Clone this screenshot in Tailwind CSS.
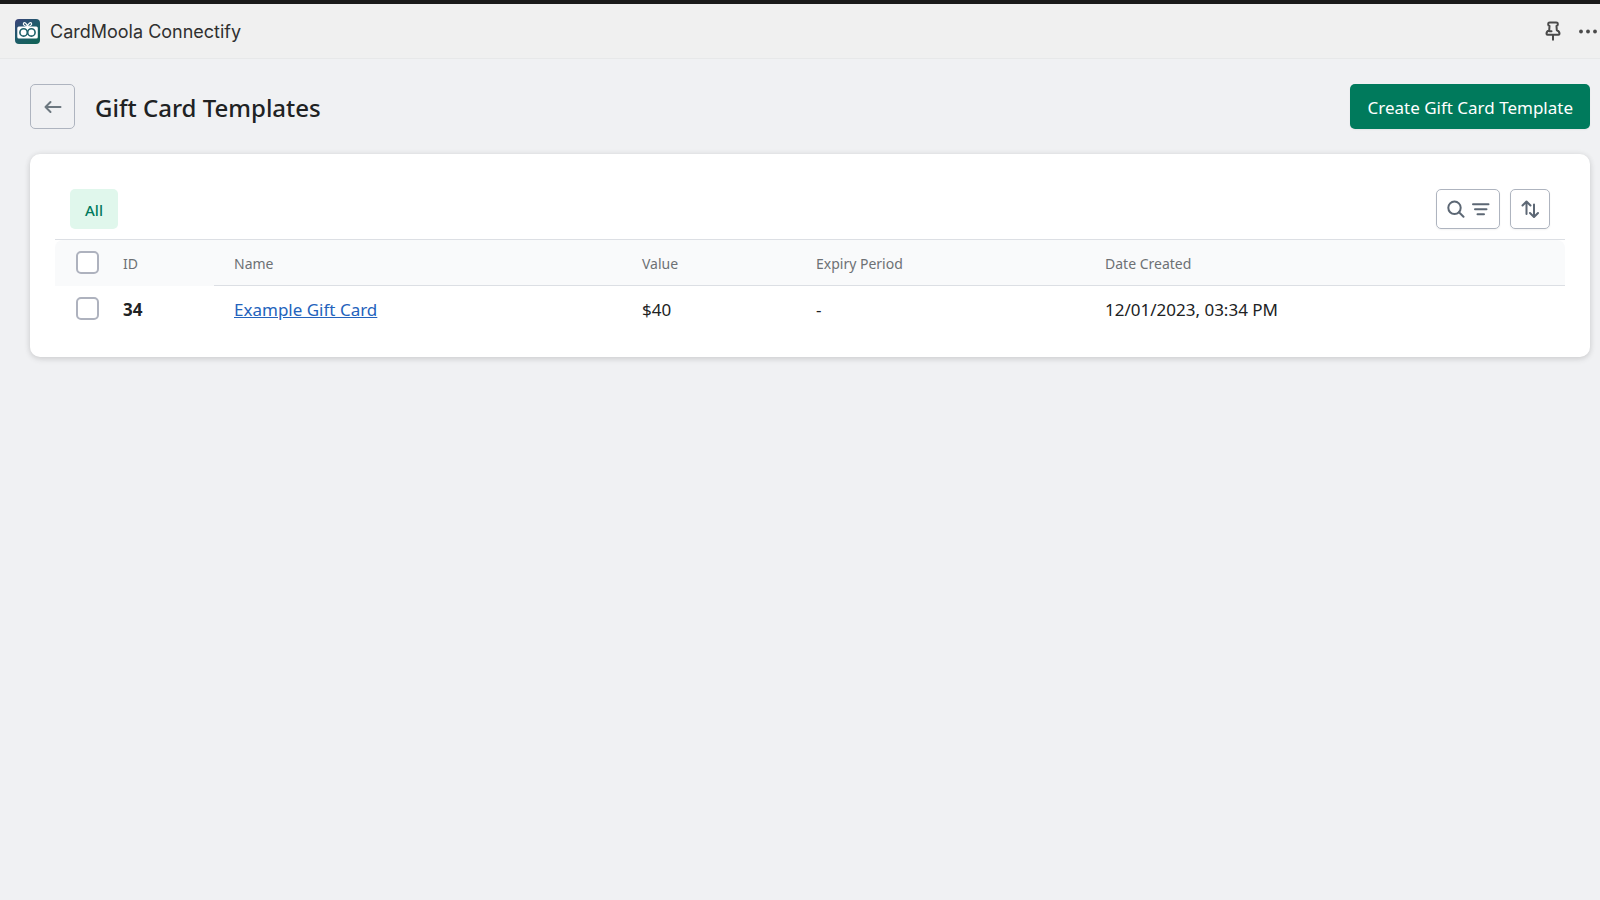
<!DOCTYPE html>
<html lang="en">
<head>
<meta charset="utf-8">
<meta name="viewport" content="width=device-width, initial-scale=1">
<title>CardMoola Connectify</title>
<script src="https://cdn.jsdelivr.net/npm/@tailwindcss/browser@4"></script>
</head>
<body class="min-h-screen bg-[#f0f1f3] font-['Noto_Sans',sans-serif] text-[17px] text-[#202223]">
<header class="flex h-[59px] items-center justify-between border-t-4 border-b border-t-[#1a1a1a] border-b-[#e7e8e9] bg-[#f0f0f0] pl-[15px]">
  <div class="flex items-center gap-[10px]">
    <svg class="size-[25px]" viewBox="0 0 25 25" aria-hidden="true">
      <defs><linearGradient id="logo" x1="0" y1="0" x2="0.7" y2="1"><stop offset="0" stop-color="#3b4279"/><stop offset="0.5" stop-color="#205a6c"/><stop offset="1" stop-color="#136259"/></linearGradient></defs>
      <rect width="25" height="25" rx="4" fill="url(#logo)"/>
      <rect x="2.3" y="7.5" width="20.5" height="12" rx="1.5" fill="#fff"/>
      <path d="M12.500 7.500C10 7.500 7.500 5.500 8.500 4.200S12 4.500 12.500 7.500C13 4.500 15.500 2.900 16.500 4.200S15 7.500 12.500 7.500" fill="none" stroke="#fff" stroke-width="1.100"/>
      <g fill="none" stroke="#1c5f68" stroke-width="1.600"><circle cx="8.600" cy="13.400" r="3.700"/><circle cx="16.400" cy="13.400" r="3.700"/></g>
    </svg>
    <span class="pt-0.5 font-['Inter',sans-serif] text-[18px] leading-6 text-[#303030]">CardMoola Connectify</span>
  </div>
  <div class="flex items-center gap-[10px] text-[#4a4a4a]">
    <button type="button" aria-label="Pin app" class="grid size-[25px] place-items-center">
      <svg class="h-[20px] w-[16px]" viewBox="0 0 16 20" fill="none" stroke="currentColor" stroke-width="2" stroke-linecap="round" stroke-linejoin="round"><path d="M4.700 1.500h6.600q1.500 0 1.500 1.300v.8q0 1.200-1.300 1.400l.3 4.200c1.900.7 2.700 2 2.700 3.500q0 1-1 1h-11q-1 0-1-1c0-1.500.8-2.800 2.700-3.500l.3-4.200Q3.200 4.800 3.200 3.600v-.8q0-1.300 1.500-1.300ZM4.500 10.200h2M8 14v4.800"/></svg>
    </button>
    <button type="button" aria-label="More actions" class="grid size-[25px] place-items-center">
      <svg class="h-[5px] w-[20px]" viewBox="0 0 20 5" fill="currentColor"><circle cx="3" cy="2.500" r="1.900"/><circle cx="10" cy="2.500" r="1.900"/><circle cx="17" cy="2.500" r="1.900"/></svg>
    </button>
  </div>
</header>

<main class="pt-[25px] pr-[10px] pl-[30px]">
  <div class="flex items-center justify-between">
    <div class="flex items-center gap-5">
      <button type="button" aria-label="Back" class="grid size-[45px] place-items-center rounded-[5px] border border-[#aeb4bf] text-[#6d7880]">
        <svg class="size-[18px]" viewBox="0 0 18 18" fill="none" stroke="currentColor" stroke-width="2" stroke-linecap="round" stroke-linejoin="round"><path d="M6.500 4 1.500 9l5 5M1.500 9h15"/></svg>
      </button>
      <h1 class="pt-0.5 text-[24px] leading-[35px] font-medium">Gift Card Templates</h1>
    </div>
    <button type="button" class="h-[45px] rounded-[5px] bg-[#007a5c] px-[17px] pt-0.5 text-white shadow-xs">Create Gift Card Template</button>
  </div>

  <section class="mt-[25px] rounded-[10px] bg-white px-[25px] pt-[35px] pb-[25px] shadow-[0_0_6px_rgba(23,24,24,0.06),0_2px_6px_rgba(0,0,0,0.12)]">
    <div class="flex items-center justify-between px-[15px] pb-[10px]">
      <button type="button" class="h-10 rounded-[5px] bg-[#e0f7ec] px-[15px] pt-0.5 text-[15px] font-medium text-[#007a5c]">All</button>
      <div class="flex gap-[10px] text-[#5c6774]">
        <button type="button" aria-label="Search and filter" class="flex h-10 w-16 items-center justify-center gap-[7px] rounded-[5px] border border-[#aeb4bf] shadow-xs">
          <svg class="size-[18px]" viewBox="0 0 18 18" fill="none" stroke="currentColor" stroke-width="2" stroke-linecap="round"><circle cx="7.500" cy="7.800" r="6.200"/><path d="m12 12.300 4.500 4.500"/></svg>
          <svg class="size-[18px]" viewBox="0 0 18 18" fill="none" stroke="currentColor" stroke-width="2" stroke-linecap="round"><path d="M1 4.300h15.500M3 9.300h11.500M5.500 14.300h6.500"/></svg>
        </button>
        <button type="button" aria-label="Sort" class="grid size-10 place-items-center rounded-[5px] border border-[#aeb4bf] shadow-xs">
          <svg class="size-[18px]" viewBox="0 0 18 18" fill="none" stroke="currentColor" stroke-width="2" stroke-linecap="round" stroke-linejoin="round"><path d="M5.500 14V2M1.500 5.500l4-4 4 4M13 4.500v12M9 13l4 4 4-4"/></svg>
        </button>
      </div>
    </div>
    <div class="border-t border-[#dcdfe4]">
      <table class="w-full table-fixed border-separate border-spacing-0 text-left">
        <colgroup><col class="w-[68px]"><col class="w-[91px]"><col class="w-[408px]"><col class="w-[174px]"><col class="w-[289px]"><col></colgroup>
        <thead>
          <tr class="h-[46px] text-[14px] text-[#6d7175]">
            <th class="rounded-tl-[8px] bg-[#f9fafb] pb-0.5 pl-[21px]"><input type="checkbox" aria-label="Select all templates" class="block size-[23px] appearance-none rounded-[5px] border-2 border-[#aeb2be] bg-white checked:bg-[#007a5c]"></th>
            <th scope="col" class="border-b border-[#f9fafb] bg-[#f9fafb] pt-0.5 font-normal">ID</th>
            <th scope="col" class="border-b border-[#dcdfe4] bg-[#f9fafb] pt-0.5 pl-5 font-normal">Name</th>
            <th scope="col" class="border-b border-[#dcdfe4] bg-[#f9fafb] pt-0.5 pl-5 font-normal">Value</th>
            <th scope="col" class="border-b border-[#dcdfe4] bg-[#f9fafb] pt-0.5 pl-5 font-normal">Expiry Period</th>
            <th scope="col" class="rounded-tr-[8px] border-b border-[#dcdfe4] bg-[#f9fafb] pt-0.5 pl-5 font-normal">Date Created</th>
          </tr>
        </thead>
        <tbody>
          <tr class="h-[46px]">
            <td class="pb-0.5 pl-[21px]"><input type="checkbox" aria-label="Select template 34" class="block size-[23px] appearance-none rounded-[5px] border-2 border-[#aeb2be] bg-white checked:bg-[#007a5c]"></td>
            <td class="pt-0.5 font-bold">34</td>
            <td class="pt-0.5 pl-5"><a href="#" class="text-[#2463bc] underline">Example Gift Card</a></td>
            <td class="pt-0.5 pl-5">$40</td>
            <td class="pt-0.5 pl-5">-</td>
            <td class="pt-0.5 pl-5">12/01/2023, 03:34 PM</td>
          </tr>
        </tbody>
      </table>
    </div>
  </section>
</main>
</body>
</html>
